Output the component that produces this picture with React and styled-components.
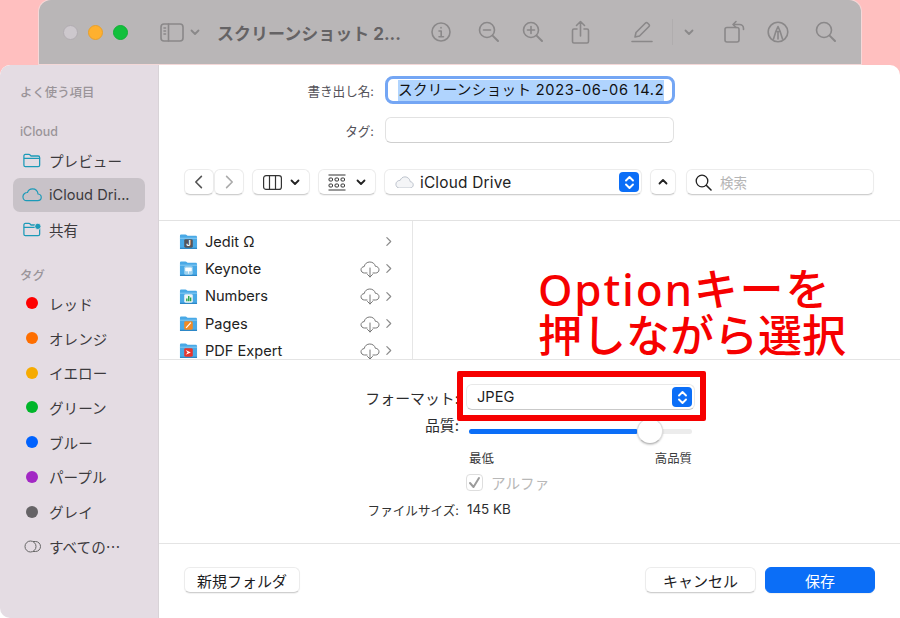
import React from "react";
import styled, { createGlobalStyle } from "styled-components";

const Global = createGlobalStyle`
  html, body { margin: 0; padding: 0; background: #ffbfbf; }
  body { font-family: Inter, "Noto Sans CJK JP", sans-serif; color: #1d1d1f; }
  * { box-sizing: border-box; }
`;

const Page = styled.div`
  position: relative; width: 900px; height: 618px; overflow: hidden; background: #ffbfbf;
`;
const BackWindow = styled.div`
  height: 64px; margin: 0 39px; background: #b9b6b7; border-radius: 12px 12px 0 0;
  display: flex; align-items: center; padding: 0 0 0 24px; color: #8a8889;
  box-shadow: 0 0 0 1px #f4d8d8;
`;
const Lights = styled.div`display: flex; gap: 10px; margin-right: 32px;`;
const Light = styled.span`
  width: 15px; height: 15px; border-radius: 50%; background: ${p => p.$c};
  border: 1px solid ${p => p.$b};
`;
const Slot = styled.span`
  width: ${p => p.$w}px; flex: none; display: flex; align-items: center; justify-content: center;
`;
const Sep = styled.span`width: 1px; height: 26px; background: #b0adae; flex: none;`;
const DocTitle = styled.span`
  width: 185px; flex: none; margin: 0 18px 0 11px; font-size: 17px; font-weight: 700;
  color: #656365; white-space: nowrap; letter-spacing: 0;
`;

const Dialog = styled.div`
  height: 553px; margin-top: 1px; display: flex; background: #fff; border-radius: 10px 10px 0 0; overflow: hidden;
`;
const Sidebar = styled.nav`
  width: 159px; flex: none; background: #e4dce3; border-right: 1px solid #d8d3d7;
  padding: 19px 13px 0; border-radius: 10px 0 0 10px; font-size: 14.6px; color: #3c3a3d;
`;
const SectionHead = styled.div`
  height: 18px; line-height: 18px; font-size: 12.4px; font-weight: 500; color: #9a9499;
  padding-left: 7px; margin-top: ${p => p.$mt || 0}px; margin-bottom: ${p => p.$mb || 0}px;
`;
const SideRow = styled.div`
  height: 34.7px; display: flex; align-items: center; border-radius: 7px; white-space: nowrap;
  background: ${p => (p.$active ? "#c8c2c8" : "transparent")};
  padding-left: 8px; gap: 6px;
`;
const IconBox = styled.span`width: 22px; flex: none; display: flex; justify-content: center;`;
const Dot = styled.span`width: 12px; height: 12px; border-radius: 50%; background: ${p => p.$c}; display: block;`;
const JpEllipsis = styled.span`font-family: "Noto Sans CJK JP", sans-serif;`;

const Main = styled.main`flex: 1; display: flex; flex-direction: column; min-width: 0;`;
const NameArea = styled.section`
  height: 91px; flex: none; padding-top: 11px; display: grid;
  grid-template-columns: 215px 290px; column-gap: 11px; grid-auto-rows: min-content; row-gap: 13px;
  align-items: center;
`;
const FieldLabel = styled.label`text-align: right; font-size: 12.6px; color: #55535a; white-space: nowrap;`;
const NameInput = styled.div`
  height: 28px; border-radius: 8px; border: 3px solid #74a6f4; background: #fff; padding-left: 10px;
  display: flex; align-items: center; overflow: hidden;
`;
const Selected = styled.span`
  background: #b0d4fe; color: #111; font-size: 14.6px; line-height: 21px; white-space: nowrap;
  width: 266px; overflow: hidden; flex: none; letter-spacing: 0.3px;
`;
const SelectedDigits = styled.span`letter-spacing: 0.7px;`;
const TagInput = styled.div`
  height: 26px; width: 289px; border-radius: 6px; border: 1px solid #e2e2e2; border-bottom-color: #cfcfcf; background: #fff;
`;
const Toolbar = styled.div`
  height: 65px; flex: none; padding: 13px 25px 0; display: flex; align-items: flex-start;
  border-bottom: 1px solid #e2e2e2; margin-top: 0;
`;
const Btn = styled.div`
  height: 26px; width: ${p => p.$w}px; flex: ${p => (p.$w ? "none" : "1")}; margin-left: ${p => p.$ml || 0}px;
  border-radius: 6px; background: #fff; border: 1px solid #ececec; border-bottom-color: #cfcfcf;
  box-shadow: 0 1px 1px rgba(0,0,0,.06);
  display: flex; align-items: center; justify-content: ${p => p.$between ? "flex-start" : "center"}; gap: ${p => p.$gap || 0}px;
`;
const PathText = styled.span`font-size: 15.4px; letter-spacing: .2px; color: #222; flex: 1; white-space: nowrap;`;
const Stepper = styled.span`
  width: 20px; height: 20px; border-radius: 4px; background: #0b6ef7; display: flex;
  align-items: center; justify-content: center; flex: none; margin-right: 2px;
`;
const Placeholder = styled.span`font-size: 13.5px; color: #b5b5b5;`;

const Browser = styled.section`
  height: 139px; flex: none; display: flex; overflow: hidden; border-bottom: 1px solid #e4e4e4; position: relative;
`;
const ListColumn = styled.div`
  width: 254px; flex: none; border-right: 1px solid #e6e6e6; padding: 7px 0 0 20px;
`;
const FileRow = styled.div`
  height: 27.3px; display: flex; align-items: center; font-size: 14.6px; color: #222; padding-right: 18px; gap: 0;
`;
const FileName = styled.span`flex: 1; margin-left: 7px; white-space: nowrap;`;
const CloudSlot = styled.span`display: flex; margin-right: 3px;`;

const Options = styled.section`
  height: 184px; flex: none; display: grid; grid-template-columns: 300px 229px;
  padding-top: 24px; column-gap: 7px; align-content: start; border-bottom: 1px solid #e4e4e4;
`;
const OptLabel = styled.div`
  font-size: 14.9px; color: #2c2c2e; text-align: right; white-space: nowrap; height: ${p => p.$h}px;
  display: flex; align-items: ${p => p.$top ? "flex-start" : "center"}; justify-content: flex-end;
  padding-top: ${p => p.$top || 0}px;
`;
const Select = styled.div`
  height: 26px; border-radius: 6px; border: 1px solid #e8e8e8; border-bottom-color: #c9c9c9; display: flex;
  align-items: center; padding-left: 10px; font-size: 14.6px; color: #1c1c1e; justify-content: space-between;
`;
const SliderCell = styled.div`position: relative; height: 42px; margin-left: 3px; width: 223px; margin-top: 0;`;
const Track = styled.div`position: absolute; left: 0; right: 0; top: 19px; height: 5px; border-radius: 3px; background: #ececec;`;
const Fill = styled.div`position: absolute; left: 0; top: 19px; height: 5px; border-radius: 3px; background: #0b6ef7;`;
const Thumb = styled.div`
  position: absolute; top: 8px; width: 26px; height: 26px; border-radius: 50%; background: #fff;
  border: 1px solid #ddd; border-bottom-color: #bbb; box-shadow: 0 1px 2px rgba(0,0,0,.2);
`;
const Ends = styled.div`
  grid-column: 2; display: flex; justify-content: space-between; font-size: 12.4px; color: #3a3a3c;
  margin-left: 3px; width: 223px; height: 22px; align-items: center; margin-top: -5px;
`;
const AlphaRow = styled.div`
  grid-column: 2; display: flex; align-items: center; gap: 8px; height: 31px; margin-top: -2px; font-size: 14.6px; color: #b8b8b8;
`;
const CheckBox = styled.span`
  width: 17px; height: 17px; border: 1px solid #dedede; border-radius: 4px;
  display: flex; align-items: center; justify-content: center; background: #fff;
`;
const SizeLabel = styled(OptLabel)`font-size: 12.6px; color: #333;`;
const SizeValue = styled.div`font-size: 13.4px; color: #2c2c2e; height: 22px; display: flex; align-items: center; margin-left: 1px;`;

const Footer = styled.footer`
  flex: 1; display: flex; align-items: flex-start; padding: 23px 25px 0;
`;
const PushBtn = styled.button`
  height: 26px; width: ${p => p.$w}px; flex: none; border-radius: 6px; font: inherit; font-size: 15px; padding: 0;
  margin-left: ${p => p.$ml || 0}px;
  background: ${p => (p.$primary ? "#0b6ef7" : "#fff")}; color: ${p => (p.$primary ? "#fff" : "#1c1c1e")};
  border: 1px solid ${p => (p.$primary ? "#0b6ef7" : "#ececec")};
  border-bottom-color: ${p => (p.$primary ? "#0b6ef7" : "#cfcfcf")};
  box-shadow: 0 1px 1px rgba(0,0,0,.06);
`;
const Spacer = styled.div`flex: 1;`;

const Callout = styled.div`
  position: absolute; left: 538px; top: 266px; color: #f60000; font-size: 44px; line-height: 46px; font-weight: 500;
  white-space: nowrap; font-family: "Noto Sans", "Noto Sans CJK JP", sans-serif;
`;
const CalloutLine = styled.div`letter-spacing: ${p => p.$ls || 0}px;`;
const RedBox = styled.div`
  position: absolute; left: 457px; top: 371px; width: 249px; height: 50px; border: 6px solid #f60000; border-radius: 2px;
`;

const stroke = { fill: "none", stroke: "currentColor", strokeWidth: 1.6, strokeLinecap: "round", strokeLinejoin: "round" };

const Chevron = ({ dir = "down", size = 10, color = "currentColor", w = 1.8 }) => (
  <svg width={size} height={size} viewBox="0 0 10 10" fill="none" stroke={color} strokeWidth={w} strokeLinecap="round" strokeLinejoin="round">
    {dir === "down" && <path d="M1.5 3.5 5 7l3.5-3.5" />}
    {dir === "up" && <path d="M1.5 6.5 5 3l3.5 3.5" />}
    {dir === "left" && <path d="M6.5 1.5 3 5l3.5 3.5" />}
    {dir === "right" && <path d="M3.5 1.5 7 5 3.5 8.5" />}
  </svg>
);
const Mag = ({ kind }) => (
  <svg width="22" height="22" viewBox="0 0 22 22" {...stroke}>
    <circle cx="9" cy="9" r="7.5" /><path d="m14.6 14.6 5.4 5.4" strokeWidth="2" />
    {kind && <path d="M5.5 9h7" />}{kind === "plus" && <path d="M9 5.5v7" />}
  </svg>
);
const StepIcon = () => (
  <svg width="11" height="15" viewBox="0 0 11 15" fill="none" stroke="#fff" strokeWidth="1.9" strokeLinecap="round" strokeLinejoin="round">
    <path d="M2 5.5 5.5 2 9 5.5M2 9.5 5.5 13 9 9.5" />
  </svg>
);
const Cloud = ({ w = 20, color = "#1c9ab8", fill = "none", sw = 1.3 }) => (
  <svg width={w} height={w * 0.68} viewBox="0 0 22 15" fill={fill} stroke={color} strokeWidth={sw}>
    <path d="M5 14h12.2c2.2 0 4-1.6 4-3.7 0-2-1.6-3.5-3.5-3.7C17.2 3.3 14.6 1 11.6 1 8.9 1 6.8 2.7 6 5 3.2 5 1 7 1 9.6 1 12 2.8 14 5 14Z" />
  </svg>
);
const SideFolder = ({ badge }) => (
  <svg width="18" height="15" viewBox="0 0 20 16" fill="none" stroke="#1c9ab8" strokeWidth="1.4" strokeLinejoin="round">
    <path d="M1 3c0-1 .6-1.7 1.6-1.7h4c.8 0 1.1.3 1.7 1l.6.7h8c1 0 1.600.6 1.600 1.600v8.600c0 1-.6 1.600-1.600 1.600H2.600C1.600 14.800 1 14.200 1 13.200Z" />
    <path d="M1 5.600h18" />
    {badge && <circle cx="16.500" cy="4.500" r="3.500" fill="#1c9ab8" stroke="#e4dce3" strokeWidth="1" />}
  </svg>
);
const AppFolder = ({ c, children }) => (
  <svg width="19" height="17" viewBox="0 0 20 17">
    <path d="M1 2.500C1 1.500 1.600 1 2.500 1h4.300c.7 0 1 .3 1.500.8l.7.700h8.500c1 0 1.500.6 1.500 1.500v11c0 1-.6 1.500-1.500 1.500h-15C1.600 16.500 1 16 1 15Z" fill="#49a9e6" />
    <path d="M1 4.500h18v1H1z" fill="#8ccdf4" />
    <path d="M1 15h18v1c0 .4-.5.500-1.500.500h-15C1.500 16.500 1 16.400 1 16Z" fill="#2d87c6" />
    <rect x="5.500" y="6" width="9" height="9" rx="1.500" fill={c} />
    {children}
  </svg>
);
const CloudDown = () => (
  <svg width="20" height="18" viewBox="0 0 20 18" fill="none" stroke="#777" strokeWidth="1" strokeLinecap="round" strokeLinejoin="round">
    <path d="M7 13H4.500C2.500 13 1 11.500 1 9.800 1 8 2.400 6.700 4.200 6.600 4.800 3.700 7 2 9.800 2c2.800 0 5 1.700 5.600 4.300 2 0 3.600 1.500 3.600 3.500S17.400 13 15.500 13H13" />
    <path d="M10 8v9M7.500 14.500 10 17l2.500-2.500" />
  </svg>
);

const tags = [
  ["レッド", "#fe0000"], ["オレンジ", "#fe6e00"], ["イエロー", "#f6ab00"],
  ["グリーン", "#00b52a"], ["ブルー", "#0062fe"], ["パープル", "#a228c4"], ["グレイ", "#656366"],
];

const apps = [
  ["Keynote", "#9fd2ef", <path key="k" d="M7 8h6v3H7zM10 11v3" stroke="#fff" fill="#fff" strokeWidth=".8" />],
  ["Numbers", "#eef3f6", <path key="n" d="M7.500 13.500h1.500v-3H7.500zM9.500 13.500h1.500V8H9.500zM11.500 13.500H13v-4h-1.500z" fill="#2aa64a" />],
  ["Pages", "#f08a24", <path key="p" d="m7.500 13 5-5.500" stroke="#fff" strokeWidth="1.200" />],
  ["PDF Expert", "#e8352c", <path key="d" d="M7 8l5.500 2.500L7 13l2-2.500Z" fill="#fff" />],
];

export default function App() {
  return (
    <Page>
      <Global />
      <BackWindow>
        <Lights>
          <Light $c="#cdc8cd" $b="#b1acb1" />
          <Light $c="#ffb02e" $b="#e8a02c" />
          <Light $c="#12c03c" $b="#10b036" />
        </Lights>
        <Slot $w={24}>
          <svg width="24" height="19" viewBox="0 0 24 19" {...stroke}><rect x="1" y="1" width="22" height="17" rx="3" /><path d="M8.500 1v17M4 5h1.500M4 8h1.500M4 11h1.500" /></svg>
        </Slot>
        <Slot $w={22}><Chevron /></Slot>
        <DocTitle>スクリーンショット 2...</DocTitle>
        <Slot $w={42}>
          <svg width="20" height="20" viewBox="0 0 20 20" {...stroke}><circle cx="10" cy="10" r="9" /><path d="M8 9h2.200v5.500M8 14.700h4.500M10 5.500v.5" /></svg>
        </Slot>
        <Slot $w={54}><Mag kind="minus" /></Slot>
        <Slot $w={34}><Mag kind="plus" /></Slot>
        <Slot $w={62}>
          <svg width="20" height="24" viewBox="0 0 20 24" {...stroke}><path d="M6 9H3a1.500 1.500 0 0 0-1.500 1.500v11A1.500 1.500 0 0 0 3 23h13a1.500 1.500 0 0 0 1.500-1.500v-11A1.500 1.500 0 0 0 16 9h-3M9.500 16V2M5.500 5.500l4-4 4 4" /></svg>
        </Slot>
        <Slot $w={60}>
          <svg width="22" height="22" viewBox="0 0 22 22" {...stroke}><path d="M1 20.500h20M4 16l1-4.500L14.500 2a1.400 1.400 0 0 1 2 0l1.500 1.500a1.400 1.400 0 0 1 0 2L8.500 15Z" /></svg>
        </Slot>
        <Sep />
        <Slot $w={32}><Chevron /></Slot>
        <Slot $w={60}>
          <svg width="22" height="24" viewBox="0 0 22 24" {...stroke}><rect x="1" y="7.500" width="14" height="14.500" rx="2" /><path d="M9 4.500h6.500a4 4 0 0 1 4 4v1M12 1.500l-3 3 3 3" /></svg>
        </Slot>
        <Slot $w={26}>
          <svg width="22" height="22" viewBox="0 0 22 22" {...stroke}><circle cx="11" cy="11" r="9.800" /><path d="M6.500 18 9 10l2-4.500 2 4.500 2.500 8M9.500 10.500h3M11 11v7" /></svg>
        </Slot>
        <Slot $w={70}><Mag /></Slot>
      </BackWindow>

      <Dialog>
        <Sidebar>
          <SectionHead>よく使う項目</SectionHead>
          <SectionHead $mt={21} $mb={2}>iCloud</SectionHead>
          <SideRow><IconBox><SideFolder /></IconBox>プレビュー</SideRow>
          <SideRow $active><IconBox><Cloud /></IconBox>iCloud Dri...</SideRow>
          <SideRow><IconBox><SideFolder badge /></IconBox>共有</SideRow>
          <SectionHead $mt={20} $mb={1}>タグ</SectionHead>
          {tags.map(([name, c]) => (
            <SideRow key={name}><IconBox><Dot $c={c} /></IconBox>{name}</SideRow>
          ))}
          <SideRow>
            <IconBox>
              <svg width="17" height="13" viewBox="0 0 17 13" fill="none" stroke="#666" strokeWidth="1"><circle cx="6.500" cy="6.500" r="5.500" /><path d="M9 1.500h2.500a5 5 0 0 1 0 10H9" /></svg>
            </IconBox>
            <span>すべての<JpEllipsis>…</JpEllipsis></span>
          </SideRow>
        </Sidebar>

        <Main>
          <NameArea>
            <FieldLabel>書き出し名:</FieldLabel>
            <NameInput><Selected>スクリーンショット <SelectedDigits>2023-06-06 14.2</SelectedDigits></Selected></NameInput>
            <FieldLabel>タグ:</FieldLabel>
            <TagInput />
          </NameArea>

          <Toolbar>
            <Btn $w={30}><Chevron dir="left" size={16} color="#555" w={1} /></Btn>
            <Btn $w={30}><Chevron dir="right" size={16} color="#aaa" w={1} /></Btn>
            <Btn $w={58} $ml={8} $gap={8}>
              <svg width="19" height="15" viewBox="0 0 19 15" fill="none" stroke="#333" strokeWidth="1.200"><rect x=".6" y=".6" width="17.800" height="13.800" rx="2.500" /><path d="M6.500.6v13.800M12.500.6v13.800" /></svg>
              <Chevron color="#222" />
            </Btn>
            <Btn $w={58} $ml={8} $gap={10}>
              <svg width="18" height="17" viewBox="0 0 18 17" fill="none" stroke="#333"><path d="M.5 1h17M.5 16h17" strokeWidth="1" />
                {[1, 7, 13].map(x => <React.Fragment key={x}><rect x={x} y="4" width="3.500" height="3" rx="1" /><rect x={x} y="10" width="3.500" height="3" rx="1" /></React.Fragment>)}
              </svg>
              <Chevron color="#222" />
            </Btn>
            <Btn $w={258} $ml={8} $between $gap={6}>
              <span style={{ width: 4, flex: "none" }} />
              <Cloud w={19} color="#b5bcc6" fill="#f4f5f7" sw={1} />
              <PathText>iCloud Drive</PathText>
              <Stepper><StepIcon /></Stepper>
            </Btn>
            <Btn $w={26} $ml={8}><Chevron dir="up" color="#222" /></Btn>
            <Btn $w={188} $ml={10} $between $gap={8}>
              <span style={{ width: 0, flex: "none" }} />
              <svg width="17" height="17" viewBox="0 0 17 17" fill="none" stroke="#222" strokeWidth="1.300" strokeLinecap="round"><circle cx="7" cy="7" r="5.800" /><path d="m11.500 11.500 4.500 4.500" strokeWidth="1.600" /></svg>
              <Placeholder>検索</Placeholder>
            </Btn>
          </Toolbar>

          <Browser>
            <ListColumn>
              <FileRow>
                <AppFolder c="#55555a"><text x="10" y="13.500" fontSize="8" fontWeight="700" fill="#fff" textAnchor="middle" fontFamily="Inter">J</text></AppFolder>
                <FileName>Jedit Ω</FileName>
                <Chevron dir="right" size={11} color="#8b8b8b" w={1.100} />
              </FileRow>
              {apps.map(([n, c, glyph]) => (
                <FileRow key={n}>
                  <AppFolder c={c}>{glyph}</AppFolder>
                  <FileName>{n}</FileName>
                  <CloudSlot><CloudDown /></CloudSlot>
                  <Chevron dir="right" size={11} color="#8b8b8b" w={1.100} />
                </FileRow>
              ))}
            </ListColumn>
          </Browser>

          <Options>
            <OptLabel $h={26}>フォーマット:</OptLabel>
            <Select>JPEG<Stepper><StepIcon /></Stepper></Select>
            <OptLabel $h={42} $top={4}>品質:</OptLabel>
            <SliderCell>
              <Track />
              <Fill style={{ width: "76%" }} />
              <Thumb style={{ left: 168 }} />
            </SliderCell>
            <Ends><span>最低</span><span>高品質</span></Ends>
            <AlphaRow>
              <CheckBox><svg width="13" height="13" viewBox="0 0 13 13" fill="none" stroke="#9b9b9b" strokeWidth="2" strokeLinecap="round" strokeLinejoin="round"><path d="m2 7 3.500 4L11 2" /></svg></CheckBox>
              アルファ
            </AlphaRow>
            <SizeLabel $h={22}>ファイルサイズ:</SizeLabel>
            <SizeValue>145 KB</SizeValue>
          </Options>

          <Footer>
            <PushBtn $w={116}>新規フォルダ</PushBtn>
            <Spacer />
            <PushBtn $w={111}>キャンセル</PushBtn>
            <PushBtn $w={110} $ml={9} $primary>保存</PushBtn>
          </Footer>
        </Main>
      </Dialog>

      <Callout>
        <CalloutLine $ls={1.8}>Optionキーを</CalloutLine>
        <CalloutLine>押しながら選択</CalloutLine>
      </Callout>
      <RedBox />
    </Page>
  );
}
